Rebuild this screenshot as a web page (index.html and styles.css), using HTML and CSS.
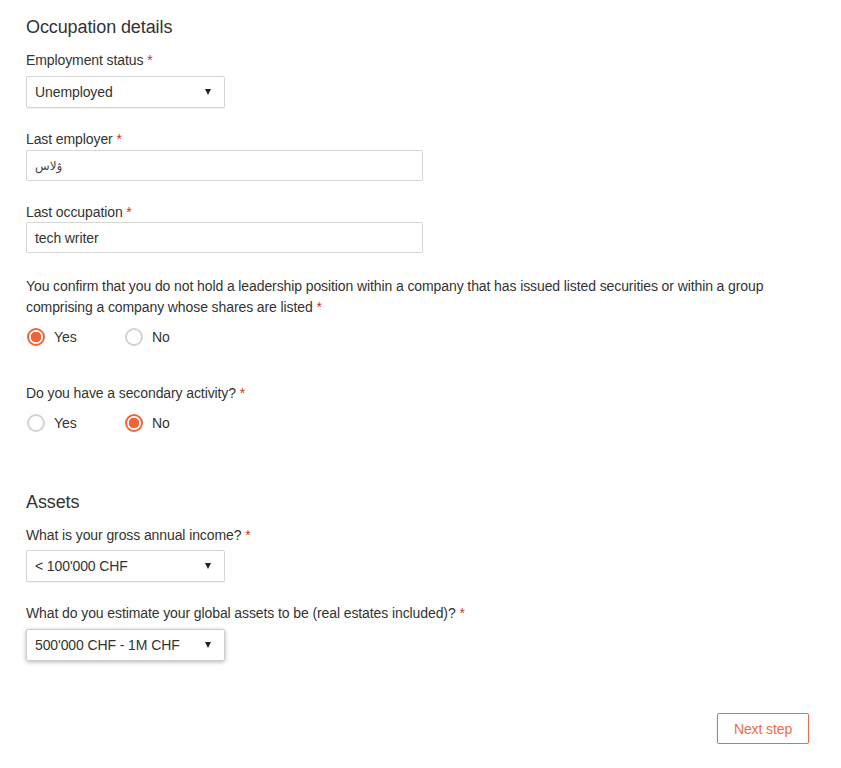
FILE: index.html
```html
<!DOCTYPE html>
<html lang="en">
<head>
<meta charset="utf-8">
<title>Occupation details</title>
<link rel="stylesheet" href="styles.css">
</head>
<body>
<form class="form">
  <h2 class="section-title first">Occupation details</h2>

  <div class="label l-employment">Employment status <span class="req">*</span></div>
  <div class="select sel-employment">
    <span class="select-value">Unemployed</span>
    <span class="caret"></span>
  </div>

  <div class="label l-gap">Last employer <span class="req">*</span></div>
  <div class="input input-employer"><span class="arabic" dir="rtl">ۋلاس</span></div>

  <div class="label l-gap">Last occupation <span class="req">*</span></div>
  <div class="input input-occupation">tech writer</div>

  <div class="question q-confirm">You confirm that you do not hold a leadership position within a company that has issued listed securities or within a group comprising a company whose shares are listed&nbsp;<span class="req">*</span></div>
  <div class="radios r-confirm">
    <div class="radio-opt"><span class="radio checked"></span><span>Yes</span></div>
    <div class="radio-opt"><span class="radio"></span><span>No</span></div>
  </div>

  <div class="label l-secondary">Do you have a secondary activity? <span class="req">*</span></div>
  <div class="radios r-secondary">
    <div class="radio-opt"><span class="radio"></span><span>Yes</span></div>
    <div class="radio-opt"><span class="radio checked"></span><span>No</span></div>
  </div>

  <h2 class="section-title assets">Assets</h2>

  <div class="label l-income">What is your gross annual income? <span class="req">*</span></div>
  <div class="select sel-income">
    <span class="select-value">&lt; 100'000 CHF</span>
    <span class="caret"></span>
  </div>

  <div class="label l-global">What do you estimate your global assets to be (real estates included)? <span class="req">*</span></div>
  <div class="select sel-global focused">
    <span class="select-value">500'000 CHF - 1M CHF</span>
    <span class="caret"></span>
  </div>

  <div class="actions">
    <button type="button" class="btn-next">Next step</button>
  </div>
</form>
</body>
</html>
```

FILE: styles.css
```css
html, body {
  margin: 0;
  padding: 0;
  background: #ffffff;
}

body {
  font-family: "Liberation Sans", Arial, sans-serif;
  font-size: 14px;
  letter-spacing: -0.1px;
  color: #333333;
}

.form {
  width: 783px;
  padding: 0 0 0 26px;
  display: flex;
  flex-direction: column;
  align-items: flex-start;
}

.section-title {
  font-size: 18px;
  line-height: 24px;
  font-weight: normal;
  color: #333333;
  margin: 0;
}

.section-title.first { margin-top: 15px; }
.section-title.assets { margin-top: 58px; }

.label {
  line-height: 20px;
}

.l-employment { margin-top: 11px; }
.l-gap { margin-top: 21px; }
.l-secondary { margin-top: 37px; }
.l-income { margin-top: 11px; }
.l-global { margin-top: 21px; }

.req { color: #c0392b; }

.select {
  box-sizing: border-box;
  width: 199px;
  height: 32px;
  border: 1px solid #d6d6d6;
  border-radius: 2px;
  padding: 0 0 0 8px;
  display: flex;
  align-items: center;
  justify-content: space-between;
  background: #ffffff;
  box-shadow: 0 1px 1px rgba(0, 0, 0, 0.06);
}

.sel-employment { margin-top: 6px; }
.sel-income { margin-top: 5px; }
.sel-global { margin-top: 6px; }

.select.focused {
  border-color: #cfcfcf;
  box-shadow: 0 1px 4px rgba(0, 0, 0, 0.3);
}

.select-value {
  line-height: 20px;
  color: #333333;
}

.caret {
  width: 0;
  height: 0;
  margin-right: 13px;
  border-left: 3.5px solid transparent;
  border-right: 3.5px solid transparent;
  border-top: 6px solid #222222;
}

.input {
  box-sizing: border-box;
  width: 397px;
  height: 31px;
  border: 1px solid #d6d6d6;
  border-radius: 2px;
  padding: 0 0 0 8px;
  display: flex;
  align-items: center;
  line-height: 20px;
  background: #ffffff;
}

.input-employer { margin-top: 1px; }
.input-occupation { margin-top: 0; }

.arabic {
  font-family: "DejaVu Sans", "Noto Sans", sans-serif;
  font-size: 12px;
  letter-spacing: 0;
  color: #444444;
}

.question {
  line-height: 21px;
  margin-top: 23px;
}

.radios {
  display: flex;
  height: 18px;
}

.r-confirm { margin-top: 10px; }
.r-secondary { margin-top: 11px; }

.radio-opt {
  width: 97px;
  display: flex;
  align-items: center;
  gap: 9px;
  line-height: 18px;
  padding-left: 1px;
}

.radio {
  box-sizing: border-box;
  width: 18px;
  height: 18px;
  border-radius: 50%;
  border: 2px solid #d3d3d3;
  background: #ffffff;
  flex-shrink: 0;
}

.radio.checked {
  border-color: #f4623a;
  background: radial-gradient(circle, #f4623a 0, #f4623a 5px, #ffffff 5.5px);
}

.actions {
  align-self: stretch;
  display: flex;
  justify-content: flex-end;
  margin-top: 52px;
}

.btn-next {
  box-sizing: border-box;
  width: 92px;
  height: 31px;
  border: 1px solid #f26a45;
  border-radius: 2px;
  background: #ffffff;
  color: #f26a45;
  font-family: "Liberation Sans", Arial, sans-serif;
  font-size: 14px;
  letter-spacing: -0.1px;
  padding: 0;
  box-shadow: 0 1px 2px rgba(0, 0, 0, 0.12);
  cursor: pointer;
}
```
